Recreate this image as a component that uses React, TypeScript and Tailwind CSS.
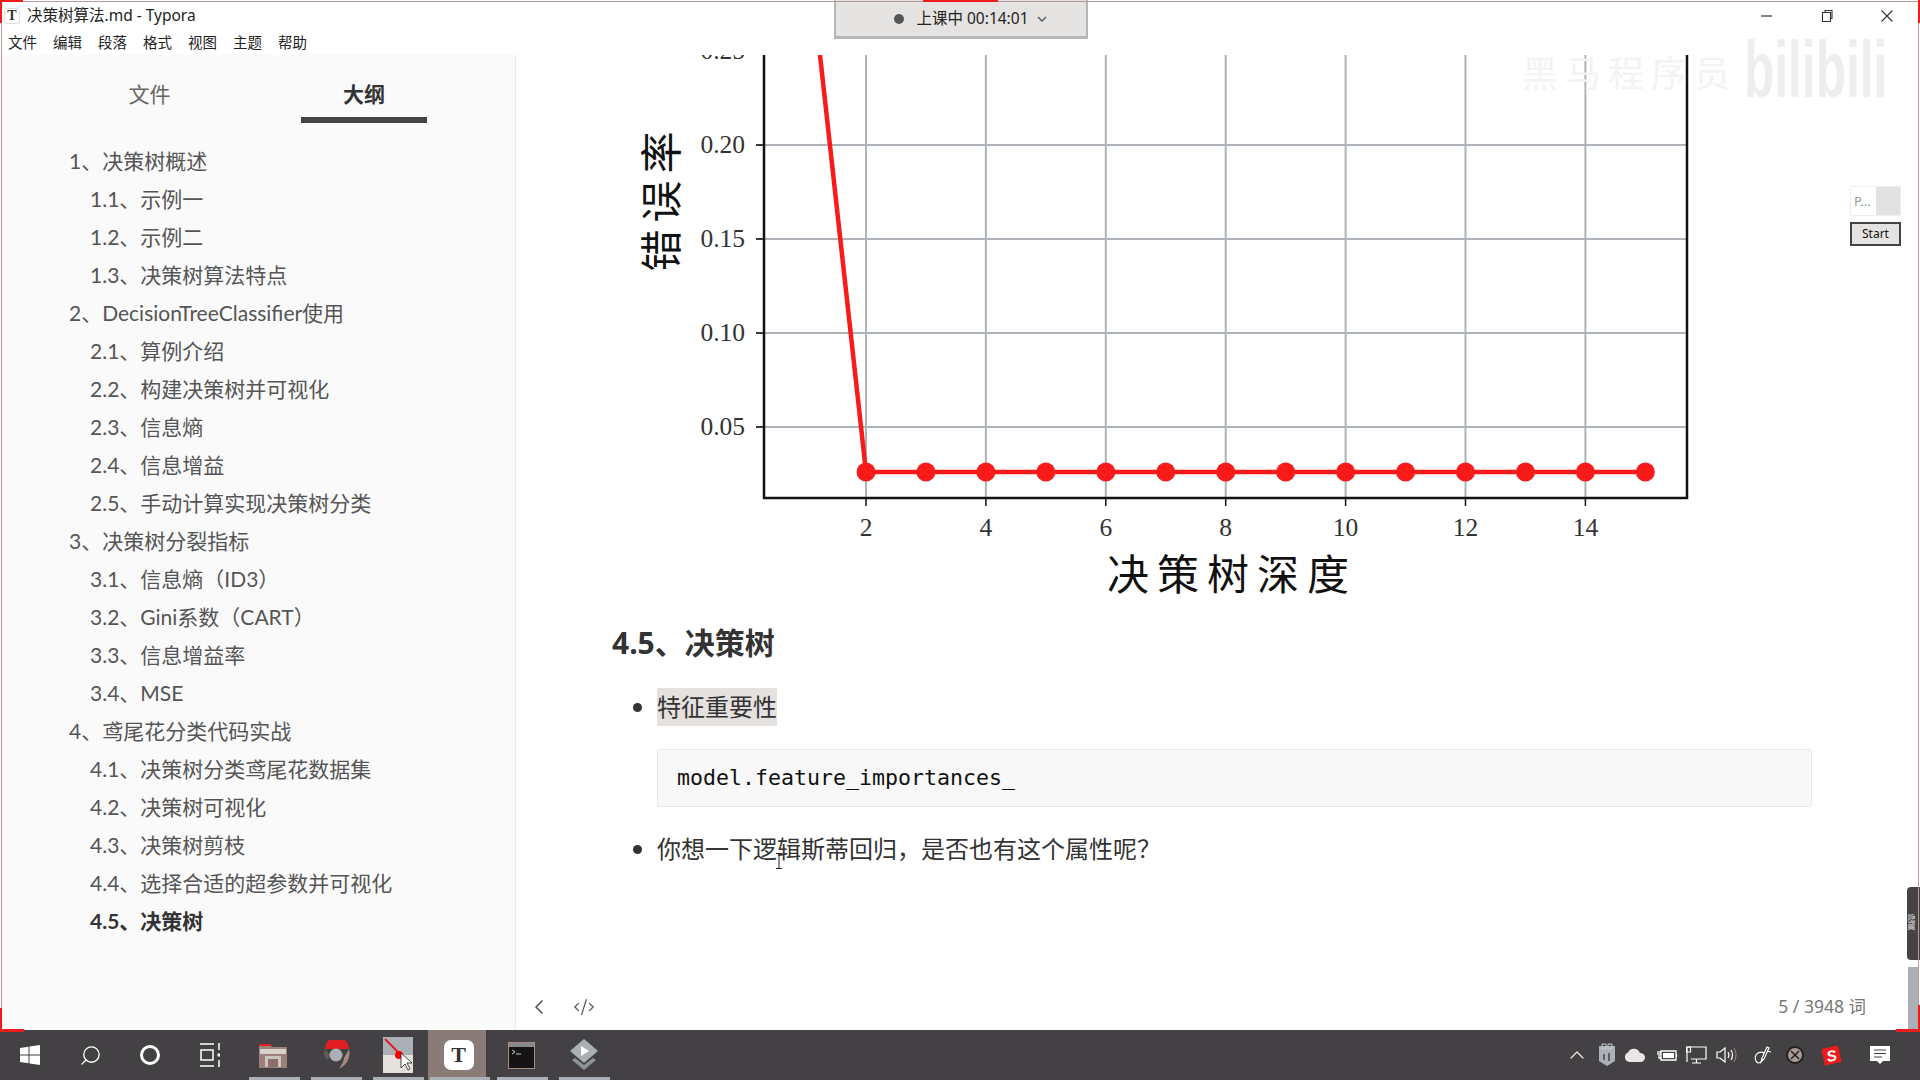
import { ChevronLeft, ChevronUp, Code2, Search } from 'lucide-react';

const OUTLINE = [
  { text: '1、决策树概述', level: 1 },
  { text: '1.1、示例一', level: 2 },
  { text: '1.2、示例二', level: 2 },
  { text: '1.3、决策树算法特点', level: 2 },
  { text: '2、DecisionTreeClassifier使用', level: 1 },
  { text: '2.1、算例介绍', level: 2 },
  { text: '2.2、构建决策树并可视化', level: 2 },
  { text: '2.3、信息熵', level: 2 },
  { text: '2.4、信息增益', level: 2 },
  { text: '2.5、手动计算实现决策树分类', level: 2 },
  { text: '3、决策树分裂指标', level: 1 },
  { text: '3.1、信息熵（ID3）', level: 2 },
  { text: '3.2、Gini系数（CART）', level: 2 },
  { text: '3.3、信息增益率', level: 2 },
  { text: '3.4、MSE', level: 2 },
  { text: '4、鸢尾花分类代码实战', level: 1 },
  { text: '4.1、决策树分类鸢尾花数据集', level: 2 },
  { text: '4.2、决策树可视化', level: 2 },
  { text: '4.3、决策树剪枝', level: 2 },
  { text: '4.4、选择合适的超参数并可视化', level: 2 },
  { text: '4.5、决策树', level: 2, active: true },
];

const MENU = ['文件', '编辑', '段落', '格式', '视图', '主题', '帮助'];
const SERIF = '"Liberation Serif", "Noto Sans CJK SC", serif';

function Chart() {
  // svg origin is page (516, 55)
  const xAt = (n: number) => 350 + (n - 2) * 59.95;
  const yTicks = [
    { label: '0.20', y: 90 },
    { label: '0.15', y: 184 },
    { label: '0.10', y: 278 },
    { label: '0.05', y: 372 },
  ];
  const pts = [2, 3, 4, 5, 6, 7, 8, 9, 10, 11, 12, 13, 14, 15];
  const xLabels = [2, 4, 6, 8, 10, 12, 14];
  return (
    <svg width="1260" height="558" viewBox="0 0 1260 558" className="block shrink-0">
      {xLabels.map((n) => (
        <line key={n} x1={xAt(n)} y1="0" x2={xAt(n)} y2="443" stroke="#adb3b8" strokeWidth="2" />
      ))}
      {yTicks.map((t) => (
        <g key={t.label}>
          <line x1="240" y1={t.y} x2="1171" y2={t.y} stroke="#adb3b8" strokeWidth="2" />
          <line x1="240" y1={t.y} x2="248" y2={t.y} stroke="#111" strokeWidth="1.5" />
          <text x="229" y={t.y + 8} textAnchor="end" fontSize="25.5" fill="#333" style={{ fontFamily: SERIF }}>
            {t.label}
          </text>
        </g>
      ))}
      <text x="229" y="4" textAnchor="end" fontSize="25.5" fill="#333" style={{ fontFamily: SERIF }}>
        0.25
      </text>
      <path d="M248 0 V443 H1171 V0" fill="none" stroke="#111" strokeWidth="2.5" />
      {xLabels.map((n) => (
        <g key={n}>
          <line x1={xAt(n)} y1="443" x2={xAt(n)} y2="451" stroke="#111" strokeWidth="1.5" />
          <text x={xAt(n)} y="481" textAnchor="middle" fontSize="25.5" fill="#333" style={{ fontFamily: SERIF }}>
            {n}
          </text>
        </g>
      ))}
      <polyline points={`304,0 350,417 ${xAt(15)},417`} fill="none" stroke="#f91a1a" strokeWidth="4.5" />
      {pts.map((n) => (
        <circle key={n} cx={xAt(n)} cy="417" r="9.5" fill="#f91a1a" />
      ))}
      <text
        x="716"
        y="535"
        textAnchor="middle"
        fontSize="42"
        letterSpacing="8"
        fill="#111"
        style={{ fontFamily: SERIF }}
      >
        决策树深度
      </text>
      <text
        transform="translate(161 143) rotate(-90)"
        textAnchor="middle"
        fontSize="42"
        letterSpacing="7"
        fill="#111"
        style={{ fontFamily: SERIF }}
      >
        错误率
      </text>
    </svg>
  );
}

function WindowControls() {
  return (
    <div className="ml-auto flex items-center pr-[26px] text-[#333]">
      <svg width="14" height="14" viewBox="0 0 14 14" className="mr-[46px]">
        <path d="M1 7h11" stroke="currentColor" strokeWidth="1.2" />
      </svg>
      <svg width="14" height="14" viewBox="0 0 14 14" className="mr-[46px]">
        <path d="M2.5 3.5h8v9h-8zM5 3.5v-2h7v8h-1.500" fill="none" stroke="currentColor" strokeWidth="1.1" />
      </svg>
      <svg width="14" height="14" viewBox="0 0 14 14">
        <path d="M1.500 1.500l11 11M12.500 1.500l-11 11" stroke="currentColor" strokeWidth="1.1" />
      </svg>
    </div>
  );
}

function Taskbar() {
  return (
    <div className="relative flex h-[50px] shrink-0 items-center bg-[#434143] text-white">
      <div className="flex h-full items-center">
        <div className="flex w-[60px] justify-center">
          <svg width="20" height="20" viewBox="0 0 20 20" fill="#fff">
            <path d="M0 3l8.500-1.200v7.700H0zM9.500 1.600L20 0v9.500H9.500zM0 10.500h8.500v7.700L0 17zM9.500 10.500H20V20l-10.500-1.600z" />
          </svg>
        </div>
        <div className="flex w-[60px] justify-center">
          <Search size={23} strokeWidth={1.4} className="-scale-x-100" />
        </div>
        <div className="flex w-[60px] justify-center">
          <div className="h-[20px] w-[20px] rounded-full border-[3px] border-white" />
        </div>
        <div className="flex w-[60px] justify-center">
          <svg width="20" height="24" viewBox="0 0 20 24" fill="none" stroke="#fff" strokeWidth="1.500">
            <path d="M0 1h14M0 23h14M1 7h12v10H1zM19 0v7M19 17v7" />
            <path d="M17.500 10.500h3v3h-3z" fill="#fff" stroke="none" />
          </svg>
        </div>
        <div className="flex w-[66px] justify-center">
          <svg width="28" height="26" viewBox="0 0 28 26">
            <path d="M0 2h11l2 3h15v21H0z" fill="#9c7f78" />
            <path d="M0 2h11l2 2H0z" fill="#e02020" />
            <path d="M1 7h26v5H1z" fill="#d8d2cc" />
            <path d="M6 14h16v11H6z" fill="#c9c4c0" />
            <path d="M9 17h10v8H9z" fill="#8d6f69" />
          </svg>
        </div>
        <div className="flex w-[62px] justify-center">
          <svg width="28" height="30" viewBox="0 0 28 30">
            <path d="M2 9a12 12 0 0 1 24 0z" fill="#e02020" />
            <path d="M26 9c2 8-2 16-10 20 3-5 5-8 5-11z" fill="#a98a82" />
            <path d="M2 9c-2 4-1 8 2 11l4-4z" fill="#5c5a5a" />
            <circle cx="13" cy="15" r="6.500" fill="#aab0b5" />
          </svg>
        </div>
        <div className="flex w-[60px] justify-center">
          <svg width="30" height="36" viewBox="0 0 30 36">
            <path d="M0 0h30v36H0z" fill="#aab0b5" />
            <path d="M0 18h30v18H0z" fill="#e4e0dc" />
            <path d="M2 2l14 14" stroke="#e02020" strokeWidth="2" />
            <circle cx="16" cy="18" r="4" fill="#f00" />
            <path d="M18 16v15l4-4 3 6 2-1-3-6h5z" fill="#fff" stroke="#222" strokeWidth=".8" />
          </svg>
        </div>
        <div className="flex h-full w-[58px] items-center justify-center bg-[#8a7a78] pl-[3px]">
          <div className="flex h-[30px] w-[30px] items-center justify-center rounded-[7px] bg-white font-['Liberation_Serif',serif] text-[22px] font-bold leading-none text-[#333]">
            T
          </div>
        </div>
        <div className="flex w-[70px] justify-center">
          <svg width="27" height="27" viewBox="0 0 27 27">
            <path d="M0 0h27v27H0z" fill="#a98a82" />
            <path d="M1 1h25v25H1z" fill="#151314" />
            <path d="M1 1h25v4H1z" fill="#888" />
            <path d="M4 8l3 2-3 2M8 12h5" stroke="#ccc" strokeWidth="1" fill="none" />
          </svg>
        </div>
        <div className="flex w-[56px] justify-center">
          <svg width="30" height="32" viewBox="0 0 30 32">
            <path d="M15 0l14 12-14 12L1 12z" fill="#aab0b5" />
            <path d="M12 7l8 5-8 5z" fill="#fff" />
            <path d="M3 21l12 10 12-10-3-2-9 7-9-7z" fill="#8f9498" />
          </svg>
        </div>
      </div>

      <div className="ml-auto flex items-center pr-[30px]">
        <ChevronUp size={24} strokeWidth={1.3} className="mr-[9px] text-[#f3e6e0]" />
        <svg width="18" height="24" viewBox="0 0 18 24" className="mr-[8px]">
          <path d="M1 3h16v15l-8 5-8-5z" fill="#aab0b5" />
          <path d="M4 1h4v5H4zM10 1h4v5h-4z" fill="none" stroke="#ccc" />
          <path d="M6 11v6M11 10v8" stroke="#444" strokeWidth="1.500" />
        </svg>
        <svg width="22" height="14" viewBox="0 0 22 14" className="mr-[11px]">
          <path d="M5 14a5 5 0 0 1-1-9.500 6.500 6.500 0 0 1 12 .5 4.500 4.500 0 0 1 1 9z" fill="#e9e6e4" />
        </svg>
        <svg width="21" height="14" viewBox="0 0 21 14" fill="none" stroke="#fff" strokeWidth="1.300" className="mr-[8px]">
          <path d="M4 3h15v9H4zM19.500 6v3M1 3v4M3 3v4M2 7v3h2" />
          <path d="M6 5h11v5H6z" fill="#fff" stroke="none" />
        </svg>
        <svg width="21" height="18" viewBox="0 0 21 18" fill="none" stroke="#fff" strokeWidth="1.200" className="mr-[9px]">
          <path d="M1 1h19v12H5M1 1v15M6 17h9M10.500 13v4" />
          <path d="M0.500 1h4v5h-4z" />
        </svg>
        <svg width="21" height="16" viewBox="0 0 21 16" fill="none" stroke="#fff" strokeWidth="1.200" className="mr-[14px]">
          <path d="M1 5h3l5-4v14l-5-4H1z" />
          <path d="M12 5q2 3 0 6" />
          <path d="M15 3q3 5 0 10" />
          <path d="M18 1q4 7 0 14" stroke="#8a7a78" />
        </svg>
        <svg width="21" height="21" viewBox="0 0 21 21" fill="none" stroke="#fff" strokeWidth="1.200" className="mr-[14px]">
          <path d="M11 13L16 2l2 1-5 11-3 3zM13 8a5 5 0 1 0-6 10 4 4 0 0 0 4-4M16 6l4 1" />
        </svg>
        <div className="mr-[19px] flex h-[18px] w-[18px] items-center justify-center rounded-full border-2 border-[#222] bg-[#aa9a96]">
          <svg width="10" height="10" viewBox="0 0 10 10" stroke="#222" strokeWidth="1.600">
            <path d="M1 1l8 8M9 1l-8 8" />
          </svg>
        </div>
        <div className="mr-[30px] flex h-[17px] w-[17px] -rotate-12 items-center justify-center bg-[#f01c1c] font-['Liberation_Sans',sans-serif] text-[15px] font-bold italic leading-none text-white">
          S
        </div>
        <svg width="20" height="19" viewBox="0 0 20 19">
          <path d="M0 0h20v15h-7l-3 3-3-3H0z" fill="#fff" />
          <path d="M4 4h12M4 7.500h12M4 11h8" stroke="#444" strokeWidth="1" />
        </svg>
      </div>

      {/* strips along the bottom edge under each open app */}
      <div className="absolute bottom-0 left-[249px] flex h-[3px] gap-[11px]">
        <div className="w-[51px] bg-[#aab0b5]" />
        <div className="w-[51px] bg-[#aab0b5]" />
        <div className="w-[51px] bg-[#aab0b5]" />
        <div className="-ml-[5px] w-[60px] bg-[#aab0b5]" />
        <div className="-ml-[4px] w-[51px] bg-[#aab0b5]" />
        <div className="w-[51px] bg-[#aab0b5]" />
      </div>
    </div>
  );
}

export default function App() {
  return (
    <div className="relative flex h-[1080px] w-[1920px] flex-col overflow-hidden bg-white font-['Noto_Sans','Noto_Sans_CJK_SC',sans-serif] text-[#333]">
      {/* title bar */}
      <div className="flex h-[30px] shrink-0 items-center pl-[4px] pt-[1px]">
        <div className="flex h-[16px] w-[16px] items-center justify-center rounded-[3px] border border-[#ddd] bg-white font-['Liberation_Serif',serif] text-[14px] font-bold leading-none text-[#333]">
          T
        </div>
        <span className="ml-[7px] text-[15.500px] leading-none text-[#222]">决策树算法.md - Typora</span>
        <WindowControls />
      </div>

      {/* menu */}
      <div className="flex h-[25px] shrink-0 items-center gap-[16px] pl-[8px] text-[14.500px] leading-none text-[#222]">
        {MENU.map((m) => (
          <span key={m}>{m}</span>
        ))}
      </div>

      <div className="flex min-h-0 flex-1">
        {/* sidebar */}
        <div className="flex w-[516px] shrink-0 flex-col border-r border-[#ececec] bg-[#fafafa]">
          <div className="flex h-[69px] shrink-0 items-start pl-[47px] pt-[22px]">
            <div className="flex w-[207px] justify-center pr-[2px] text-[21px] leading-[34px] text-[#666]">文件</div>
            <div className="ml-[47px] h-[46px] w-[126px] border-b-[6px] border-[#444] text-center text-[21px] font-bold leading-[34px] text-[#333]">
              大纲
            </div>
          </div>
          <div className="pt-[18px] font-['Lato','Noto_Sans_CJK_SC',sans-serif]">
            {OUTLINE.map((item) => (
              <div
                key={item.text}
                className={`h-[38px] text-[21px] leading-[38px] ${item.level === 1 ? 'pl-[69px]' : 'pl-[90px]'} ${
                  item.active ? 'font-bold text-[#333]' : 'text-[#555]'
                }`}
              >
                {item.text}
              </div>
            ))}
          </div>
        </div>

        {/* editor */}
        <div className="flex min-w-0 flex-1 flex-col">
          <div className="min-h-0 flex-1 overflow-hidden">
            <Chart />
            <h2 className="ml-[96px] mt-[10px] text-[30px] font-bold leading-[40px] text-[#333]">4.5、决策树</h2>
            <ul className="ml-[141px] mt-[25px] w-[1155px] text-[24px] text-[#333]">
              <li className="flex h-[38px] items-center">
                <span className="absolute ml-[-24px] h-[9px] w-[9px] rounded-full bg-[#333]" />
                <span className="bg-[#e4e1de] leading-[38px]">特征重要性</span>
              </li>
              <li className="mt-[23px] flex h-[58px] items-center rounded-[3px] border border-[#e7e7e7] bg-[#f8f8f8] pl-[19px] font-['DejaVu_Sans_Mono',monospace] text-[21.600px] text-[#111]">
                model.feature_importances_
              </li>
              <li className="mt-[23px] flex h-[38px] items-center">
                <span className="absolute ml-[-24px] h-[9px] w-[9px] rounded-full bg-[#333]" />
                你想一下逻辑斯蒂回归，是否也有这个属性呢？
              </li>
            </ul>
          </div>
          <div className="flex h-[46px] shrink-0 items-center pb-[1px] pl-[11px] pr-[54px] text-[#555]">
            <ChevronLeft size={24} strokeWidth={1.7} />
            <Code2 size={22} strokeWidth={1.4} className="ml-[22px]" />
            <span className="ml-auto text-[17.500px] text-[#777]">5 / 3948 词</span>
          </div>
        </div>
      </div>

      <Taskbar />

      {/* recording pill */}
      <div className="absolute left-[834px] top-0 flex h-[39px] w-[254px] items-center justify-center border-x-2 border-b-[3px] border-[#b4b6b8] bg-[#e5e3e1] pl-[19px] pt-[1px] text-[15.500px] leading-none text-[#222]">
        <span className="mr-[12px] h-[10px] w-[10px] rounded-full bg-[#555]" />
        上课中 00:14:01
        <svg width="10" height="6" viewBox="0 0 10 6" className="ml-[8px]" fill="none" stroke="#555" strokeWidth="1.400">
          <path d="M1 1l4 4 4-4" />
        </svg>
      </div>

      {/* watermark */}
      <div className="absolute left-[1522px] top-[37px] flex h-[60px] items-center whitespace-nowrap text-[#f3f3f3]">
        <span className="mt-[14px] shrink-0 text-[36px] leading-none tracking-[7px]">黑马程序员</span>
        <span className="ml-[7px] mt-[6px] shrink-0 origin-left scale-x-[0.62] font-['Liberation_Sans',sans-serif] text-[80px] font-bold leading-none text-[#eeeeee]">
          bilibili
        </span>
      </div>

      {/* timer widget */}
      <div className="absolute left-[1850px] top-[186px] flex w-[51px] flex-col gap-[6px] bg-white">
        <div className="flex h-[30px] border border-[#eee] pl-[3px] text-[13px] leading-[28px] text-[#999]">
          P...
          <div className="ml-auto h-full w-[24px] bg-[#e4e2e0]" />
        </div>
        <div className="flex h-[24px] items-center justify-center border-2 border-[#444] bg-[#e5e3e1] text-[12px] leading-none text-[#111]">
          Start
        </div>
      </div>

      {/* right edge */}
      <div className="absolute left-[1907px] top-[887px] flex h-[73px] w-[13px] items-end justify-center rounded-l-[4px] bg-[#444] pb-[4px] text-[8px] leading-none text-[#ddd] [writing-mode:vertical-rl]">
        隐藏
      </div>
      <div className="absolute left-[1908px] top-[967px] h-[63px] w-[11px] bg-[#aab0b5]" />

      {/* recording frame */}
      <div className="absolute inset-x-0 top-[1px] h-px bg-[#b99a98]" />
      <div className="absolute bottom-[50px] left-[1px] top-0 w-px bg-[#b99a98]" />
      <div className="absolute bottom-[50px] right-[1px] top-0 w-px bg-[#b99a98]" />
      <div className="absolute left-0 top-0 h-[2px] w-[23px] bg-[#f01c1c]" />
      <div className="absolute left-0 top-0 h-[23px] w-[2px] bg-[#f01c1c]" />
      <div className="absolute left-[923px] top-0 h-[2px] w-[75px] bg-[#f01c1c]" />
      <div className="absolute right-0 top-0 h-[23px] w-[2px] bg-[#f01c1c]" />
      <div className="absolute bottom-[50px] left-0 h-[22px] w-[2px] bg-[#f01c1c]" />
      <div className="absolute bottom-[48px] left-0 h-[3px] w-[24px] bg-[#f01c1c]" />
      <div className="absolute bottom-[50px] right-0 h-[25px] w-[2px] bg-[#f01c1c]" />
      <div className="absolute bottom-[48px] right-0 h-[3px] w-[24px] bg-[#f01c1c]" />

      {/* text cursor */}
      <svg width="8" height="16" viewBox="0 0 8 16" className="absolute left-[775px] top-[853px]" fill="none" stroke="#222">
        <path d="M1 .5h6M4 .5v15M1 15.500h6" />
      </svg>
    </div>
  );
}
